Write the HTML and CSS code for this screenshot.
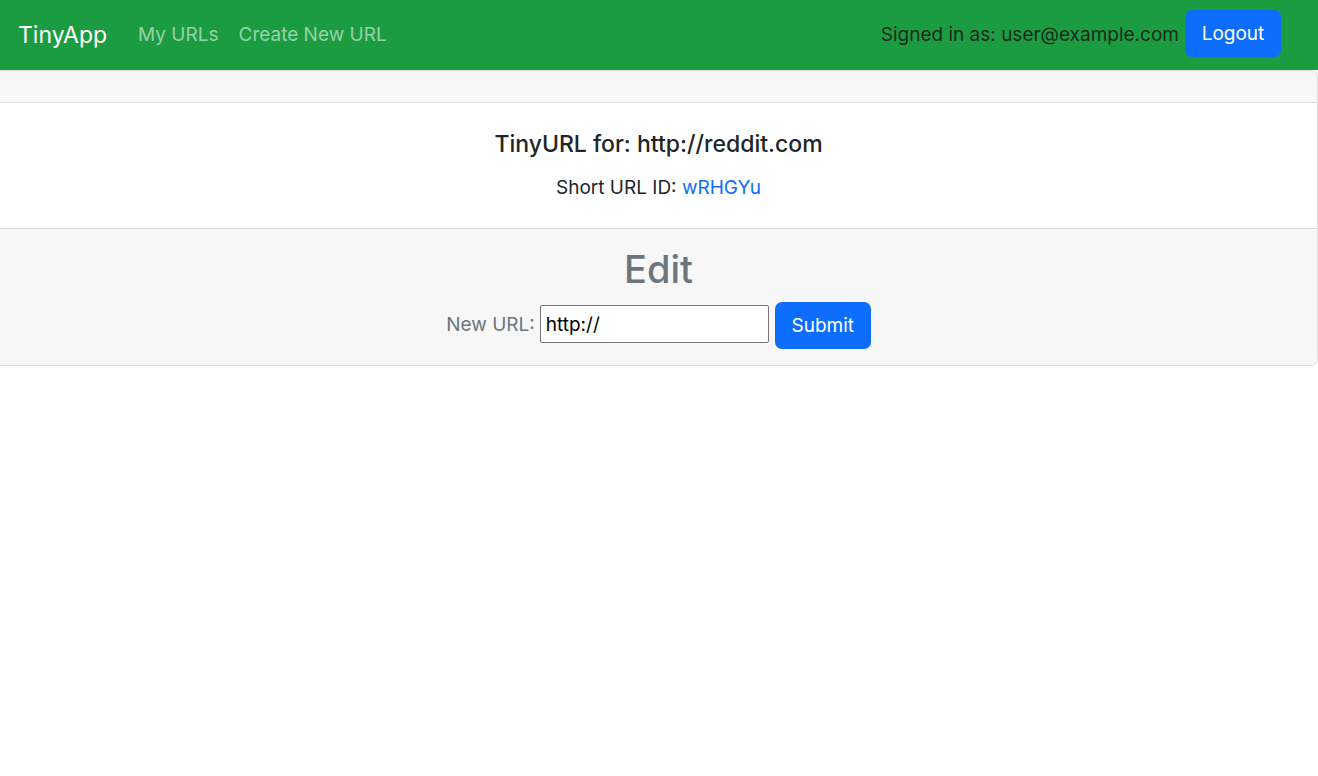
FILE: index.html
```html
<!DOCTYPE html>
<html lang="en">
<head>
<meta charset="utf-8">
<title>TinyApp</title>
<link rel="stylesheet" href="styles.css">
</head>
<body>
<nav class="navbar">
  <a class="brand" href="#">TinyApp</a>
  <ul class="nav-links">
    <li><a href="#">My URLs</a></li>
    <li><a href="#">Create New URL</a></li>
  </ul>
  <div class="nav-user">
    <span class="signed">Signed in as: user@example.com</span>
    <button class="btn btn-primary btn-logout">Logout</button>
  </div>
</nav>
<main class="card">
  <div class="card-header"></div>
  <div class="card-body">
    <h5 class="card-title">TinyURL for: http://reddit.com</h5>
    <p class="card-text">Short URL ID: <a href="#">wRHGYu</a></p>
  </div>
  <div class="card-footer">
    <h2 class="edit-title">Edit</h2>
    <form class="edit-form">
      <label for="newurl">New URL:</label>
      <input id="newurl" type="text" value="http://">
      <button class="btn btn-primary btn-submit" type="button">Submit</button>
    </form>
  </div>
</main>
</body>
</html>
```
FILE: styles.css
```css
* { box-sizing: border-box; }
html, body { margin: 0; padding: 0; }
body {
  font-family: Inter, "Noto Sans", "Liberation Sans", sans-serif;
  font-size: 20px;
  line-height: 1.5;
  color: #212529;
  background: #fff;
}
.navbar {
  height: 70px;
  background: #1c9c41;
  display: flex;
  align-items: center;
  padding: 0 37px 0 18px;
}
.brand {
  font-size: 23px;
  color: #fff;
  text-decoration: none;
  line-height: 30px;
  margin-right: 21px;
  margin-bottom: 1px;
}
.nav-links {
  list-style: none;
  margin: 0;
  padding: 0;
  display: flex;
}
.nav-links a {
  display: block;
  padding: 0 10px;
  color: rgba(255,255,255,0.55);
  text-decoration: none;
  font-size: 19px;
}
.nav-user {
  margin-left: auto;
  display: flex;
  align-items: center;
}
.signed {
  color: #1d2a20;
  font-size: 19px;
}
.btn {
  font-family: inherit;
  border: none;
  border-radius: 7px;
  color: #fff;
  font-size: 19px;
  cursor: pointer;
}
.btn-primary { background: #0d6efd; }
.btn-logout {
  width: 96px;
  height: 47px;
  margin-left: 6px;
  margin-bottom: 3px;
}
.card {
  display: block;
  border: 1px solid #dcdcdc;
  border-left: 0;
  border-radius: 0 7px 7px 0;
  overflow: hidden;
  text-align: center;
}
.card-header {
  height: 32px;
  background: #f7f7f7;
  border-bottom: 1px solid #dcdcdc;
}
.card-body {
  height: 126px;
  padding: 26px 20px 0;
  border-bottom: 1px solid #dcdcdc;
}
.card-title {
  margin: 0 0 14px;
  font-size: 23px;
  font-weight: 500;
  line-height: 30px;
}
.card-text {
  margin: 0;
  font-size: 19px;
  line-height: 30px;
}
.card-text a { color: #0d6efd; text-decoration: none; }
.card-footer {
  height: 136px;
  background: #f7f7f7;
  padding-top: 16px;
}
.edit-title {
  margin: 0;
  font-size: 38px;
  font-weight: 500;
  line-height: 48px;
  color: #6c757d;
}
.edit-form {
  margin-top: 9px;
  display: flex;
  justify-content: center;
  align-items: center;
}
.edit-form label {
  color: #6c757d;
  font-size: 19px;
}
.edit-form input {
  width: 229px;
  height: 38px;
  margin-left: 5px;
  margin-bottom: 3px;
  border: 1px solid #767676;
  border-radius: 2px;
  font-family: inherit;
  font-size: 19px;
  color: #000;
  padding: 0 5px;
  background: #fff;
}
.btn-submit {
  width: 96px;
  height: 47px;
  margin-left: 6px;
}
```
